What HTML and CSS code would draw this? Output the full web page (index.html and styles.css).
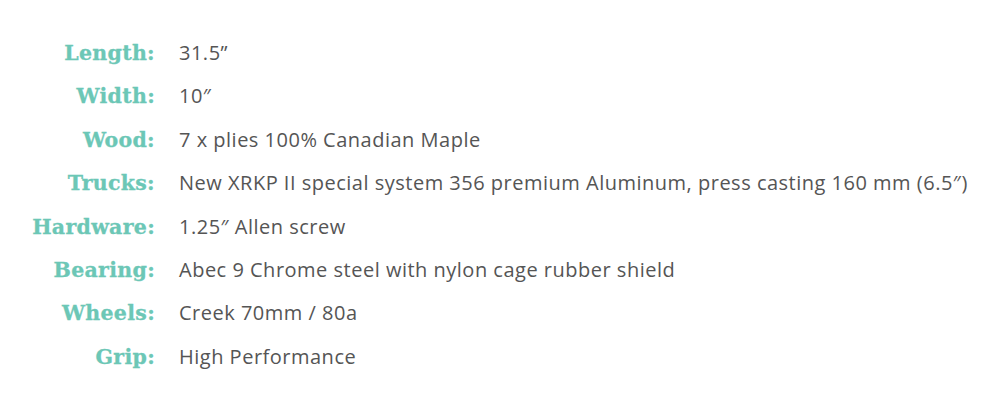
FILE: index.html
```html
<!DOCTYPE html>
<html>
<head>
<meta charset="utf-8">
<link rel="stylesheet" href="styles.css">
</head>
<body>
<dl class="specs">
  <dt>Length:</dt><dd>31.5”</dd>
  <dt>Width:</dt><dd>10″</dd>
  <dt>Wood:</dt><dd>7 x plies 100% Canadian Maple</dd>
  <dt>Trucks:</dt><dd>New XRKP II special system 356 premium Aluminum, press casting 160 mm (6.5″)</dd>
  <dt>Hardware:</dt><dd>1.25″ Allen screw</dd>
  <dt>Bearing:</dt><dd>Abec 9 Chrome steel with nylon cage rubber shield</dd>
  <dt>Wheels:</dt><dd>Creek 70mm / 80a</dd>
  <dt>Grip:</dt><dd>High Performance</dd>
</dl>
</body>
</html>
```
FILE: styles.css
```css
html, body {
  margin: 0;
  padding: 0;
  background: #ffffff;
}
.specs {
  margin: 0;
  padding: 31px 0 0 0;
  display: grid;
  grid-template-columns: 155px 1fr;
  grid-auto-rows: 43.4px;
  column-gap: 24px;
  row-gap: 0;
  align-items: baseline;
}
.specs dt {
  margin: 0;
  text-align: right;
  font-family: "DejaVu Serif", serif;
  font-weight: bold;
  font-size: 20.5px;
  line-height: 43.4px;
  color: #6cc7b6;
  letter-spacing: 0.3px;
  -webkit-text-stroke: 0.3px #6cc7b6;
}
.specs dd {
  margin: 0;
  font-family: "Open Sans", sans-serif;
  font-size: 20px;
  line-height: 43.4px;
  color: #555555;
  letter-spacing: 0.5px;
}
```
